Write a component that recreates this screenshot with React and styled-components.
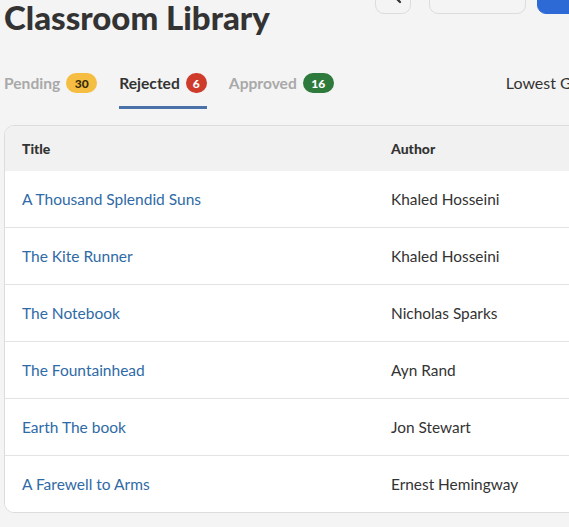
import React from "react";
import styled, { createGlobalStyle } from "styled-components";

const GlobalStyle = createGlobalStyle`
  html, body {
    margin: 0;
    padding: 0;
    background: #f4f4f4;
    overflow: hidden;
  }
  body {
    font-family: Lato, "Open Sans", sans-serif;
    color: #333;
  }
`;

const Page = styled.div`
  width: 820px;
  margin-top: -24px;
  padding-left: 4px;
`;

const Header = styled.div`
  display: flex;
  align-items: flex-start;
`;

const Title = styled.h1`
  flex: none;
  width: 371px;
  margin: 25px 0 0 0;
  font-size: 33px;
  line-height: 33px;
  font-weight: 900;
  color: #333;
  white-space: nowrap;
`;

const Actions = styled.div`
  display: flex;
`;

const ActionButton = styled.button`
  height: 38px;
  width: ${(p) => p.w}px;
  margin-left: ${(p) => p.gap}px;
  border: 1px solid ${(p) => (p.primary ? "#2d6ad6" : "#dcdcdc")};
  border-radius: 9px;
  background: ${(p) => (p.primary ? "#2d6ad6" : "#f4f4f4")};
  display: flex;
  align-items: center;
  justify-content: center;
  padding: 0;
  color: #333;
`;

const TabBar = styled.div`
  display: flex;
  align-items: flex-start;
  margin-top: 39px;
`;

const Tab = styled.div`
  display: flex;
  align-items: center;
  gap: 6px;
  height: 20px;
  padding-bottom: 13px;
  margin-right: 22px;
  border-bottom: 3px solid ${(p) => (p.active ? "#4a72a8" : "transparent")};
  font-size: 15.6px;
  font-weight: 700;
  color: ${(p) => (p.active ? "#333" : "#a9a9a9")};
`;

const Badge = styled.span`
  display: inline-flex;
  align-items: center;
  justify-content: center;
  height: 20px;
  min-width: ${(p) => (p.wide ? 31 : 21)}px;
  padding: 0 ${(p) => (p.wide ? 0 : 2)}px;
  box-sizing: border-box;
  border-radius: 10px;
  background: ${(p) => p.bg};
  color: ${(p) => p.fg};
  font-size: 12px;
  font-weight: 900;
`;

const Sort = styled.div`
  margin-left: 150px;
  height: 20px;
  line-height: 20px;
  font-size: 16px;
  color: #333;
  white-space: nowrap;
`;

const Card = styled.div`
  margin-top: 16px;
  background: #fff;
  border: 1px solid #dcdcdc;
  border-radius: 10px;
  overflow: hidden;
`;

const Row = styled.div`
  display: grid;
  grid-template-columns: 369px 1fr;
  align-items: center;
  height: ${(p) => (p.head ? 45 : 56)}px;
  padding-left: 17px;
  background: ${(p) => (p.head ? "#f1f1f1" : "#fff")};
  border-top: ${(p) => (p.divider ? "1px solid #e3e3e3" : "none")};
`;

const HeadCell = styled.div`
  font-size: 14px;
  font-weight: 900;
  color: #333;
`;

const BookLink = styled.a`
  font-size: 15.5px;
  color: #2f6aa6;
  text-decoration: none;
`;

const Cell = styled.div`
  font-size: 15.4px;
  color: #333;
`;

const books = [
  { title: "A Thousand Splendid Suns", author: "Khaled Hosseini" },
  { title: "The Kite Runner", author: "Khaled Hosseini" },
  { title: "The Notebook", author: "Nicholas Sparks" },
  { title: "The Fountainhead", author: "Ayn Rand" },
  { title: "Earth The book", author: "Jon Stewart" },
  { title: "A Farewell to Arms", author: "Ernest Hemingway" },
];

function SearchIcon() {
  return (
    <svg width="18" height="18" viewBox="0 0 18 18" fill="none">
      <circle cx="7" cy="7" r="5.5" stroke="#333" strokeWidth="2" />
      <path d="M11 11l5 5" stroke="#333" strokeWidth="2.2" strokeLinecap="round" />
    </svg>
  );
}

export default function App() {
  return (
    <>
      <GlobalStyle />
      <Page>
        <Header>
          <Title>Classroom Library</Title>
          <Actions>
            <ActionButton w={36} gap={0}>
              <SearchIcon />
            </ActionButton>
            <ActionButton w={97} gap={18} />
            <ActionButton w={90} gap={11} primary />
          </Actions>
        </Header>

        <TabBar>
          <Tab>
            Pending
            <Badge wide bg="#f5bd41" fg="#3a2c06">30</Badge>
          </Tab>
          <Tab active>
            Rejected
            <Badge bg="#cf3b2b" fg="#fff">6</Badge>
          </Tab>
          <Tab>
            Approved
            <Badge wide bg="#2e7a3d" fg="#fff">16</Badge>
          </Tab>
          <Sort>Lowest Grade</Sort>
        </TabBar>

        <Card>
          <Row head>
            <HeadCell>Title</HeadCell>
            <HeadCell>Author</HeadCell>
          </Row>
          {books.map((b, i) => (
            <Row key={b.title} divider={i > 0}>
              <BookLink href="#">{b.title}</BookLink>
              <Cell>{b.author}</Cell>
            </Row>
          ))}
        </Card>
      </Page>
    </>
  );
}
